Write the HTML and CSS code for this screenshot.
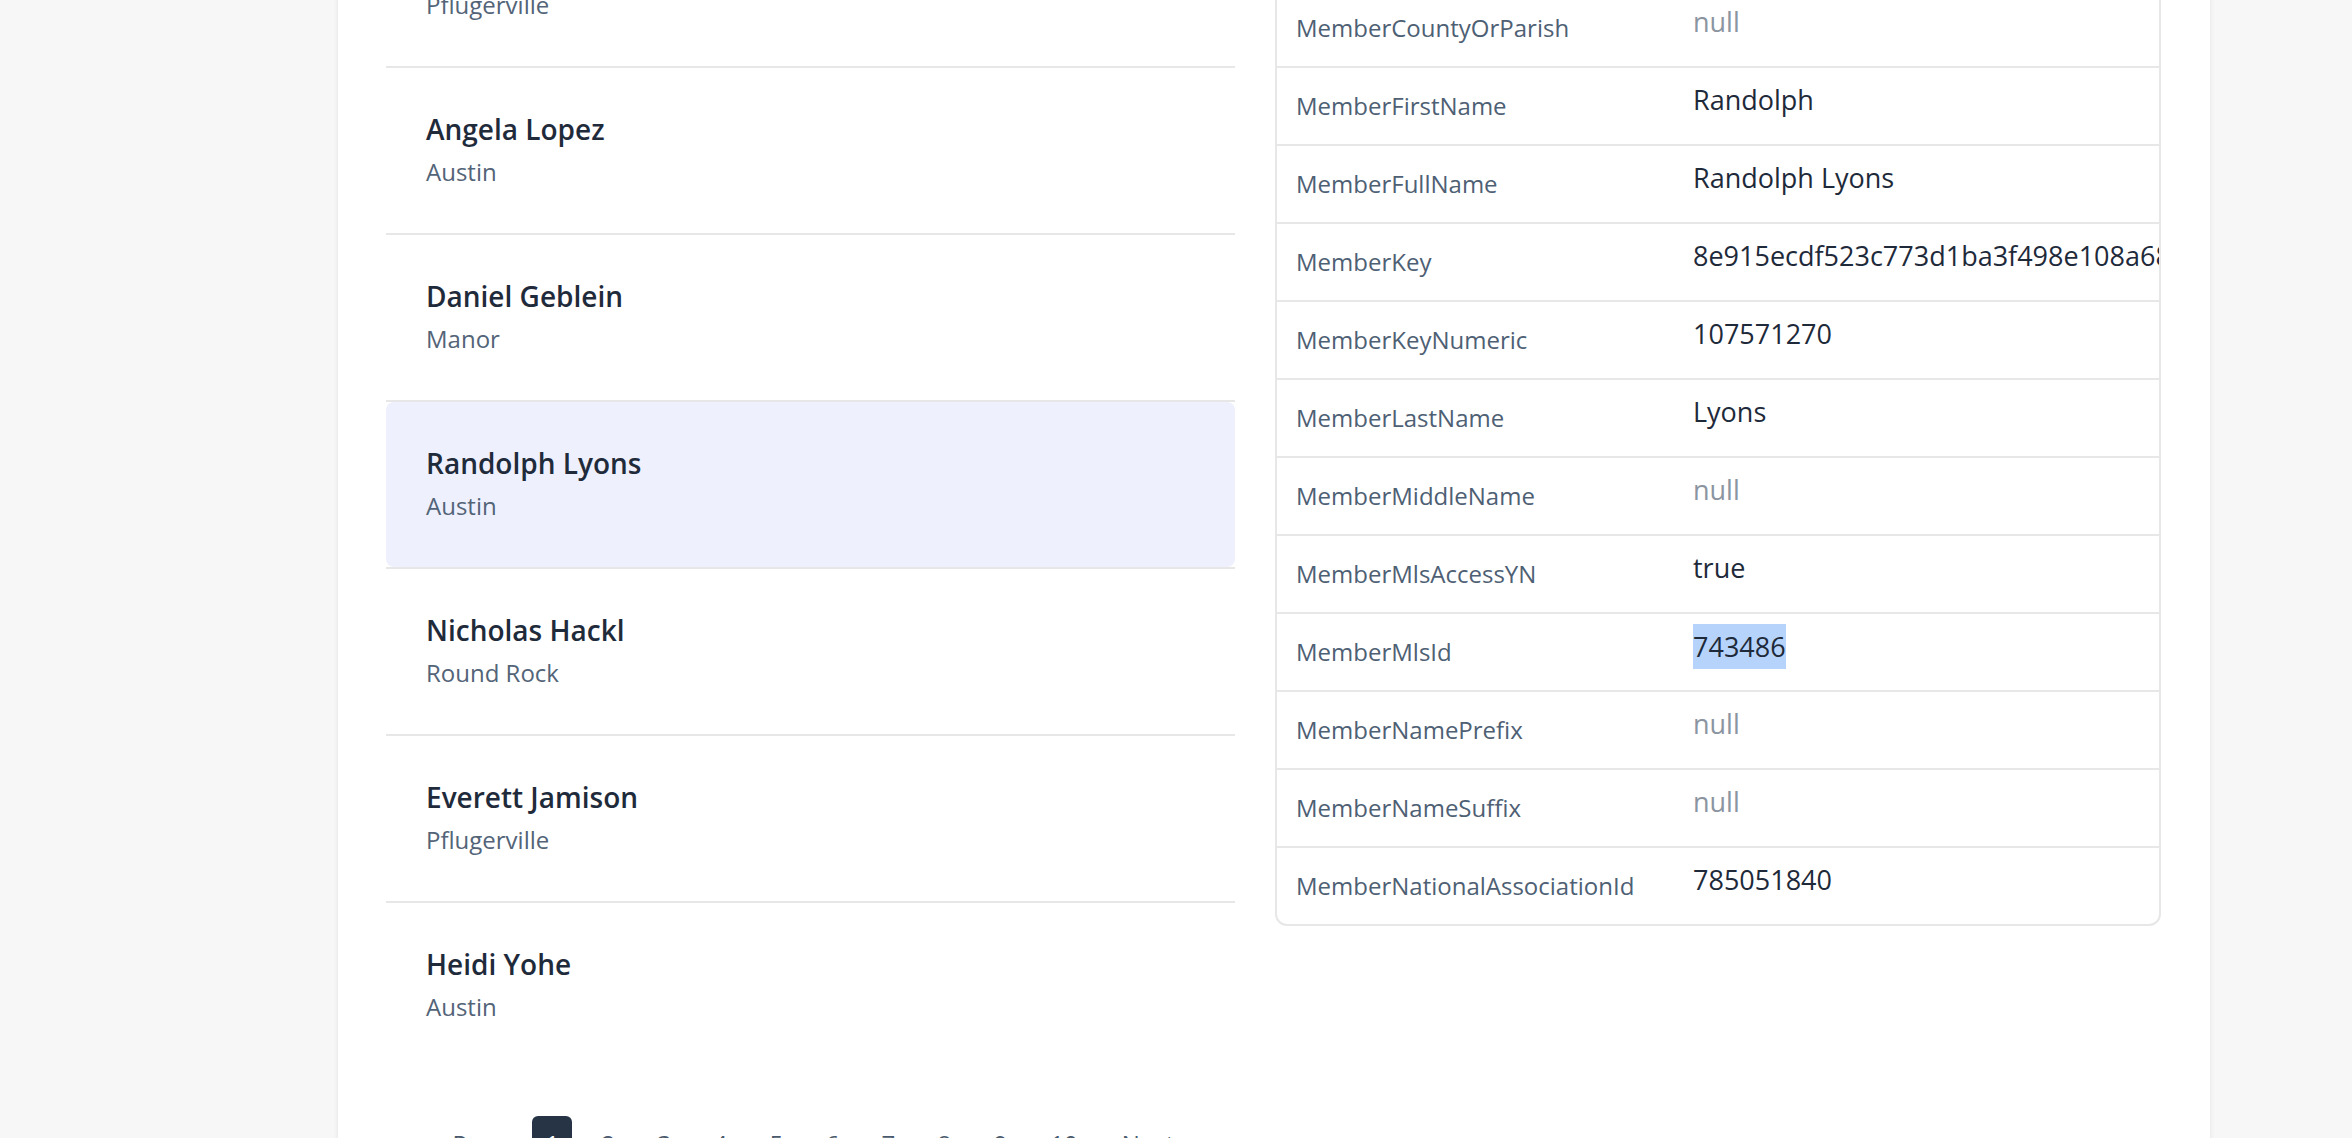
FILE: index.html
```html
<!DOCTYPE html>
<html lang="en">
<head>
<meta charset="utf-8">
<title>Members</title>
<link rel="stylesheet" href="styles.css">
</head>
<body>
<main class="page">
  <section class="card">
    <div class="columns">
      <div class="list-col">
        <ul class="member-list">
          <li class="member"><div class="member-inner"><div class="member-name">Sarah Whitfield</div><div class="member-city">Pflugerville</div></div></li>
          <li class="member"><div class="member-inner"><div class="member-name">Angela Lopez</div><div class="member-city">Austin</div></div></li>
          <li class="member"><div class="member-inner"><div class="member-name">Daniel Geblein</div><div class="member-city">Manor</div></div></li>
          <li class="member is-selected"><div class="member-inner"><div class="member-name">Randolph Lyons</div><div class="member-city">Austin</div></div></li>
          <li class="member"><div class="member-inner"><div class="member-name">Nicholas Hackl</div><div class="member-city">Round Rock</div></div></li>
          <li class="member"><div class="member-inner"><div class="member-name">Everett Jamison</div><div class="member-city">Pflugerville</div></div></li>
          <li class="member"><div class="member-inner"><div class="member-name">Heidi Yohe</div><div class="member-city">Austin</div></div></li>
        </ul>
        <nav class="pager">
          <a class="pager-item">Prev</a>
          <a class="pager-item is-num is-current">1</a>
          <a class="pager-item is-num">2</a>
          <a class="pager-item is-num">3</a>
          <a class="pager-item is-num">4</a>
          <a class="pager-item is-num">5</a>
          <a class="pager-item is-num">6</a>
          <a class="pager-item is-num">7</a>
          <a class="pager-item is-num">8</a>
          <a class="pager-item is-num">9</a>
          <a class="pager-item">10</a>
          <a class="pager-item">Next</a>
        </nav>
      </div>
      <div class="detail-col">
        <div class="fields">
          <div class="field"><div class="field-label">MemberCountyOrParish</div><div class="field-value is-null">null</div></div>
          <div class="field"><div class="field-label">MemberFirstName</div><div class="field-value">Randolph</div></div>
          <div class="field"><div class="field-label">MemberFullName</div><div class="field-value">Randolph Lyons</div></div>
          <div class="field"><div class="field-label">MemberKey</div><div class="field-value">8e915ecdf523c773d1ba3f498e108a68</div></div>
          <div class="field"><div class="field-label">MemberKeyNumeric</div><div class="field-value">107571270</div></div>
          <div class="field"><div class="field-label">MemberLastName</div><div class="field-value">Lyons</div></div>
          <div class="field"><div class="field-label">MemberMiddleName</div><div class="field-value is-null">null</div></div>
          <div class="field"><div class="field-label">MemberMlsAccessYN</div><div class="field-value">true</div></div>
          <div class="field"><div class="field-label">MemberMlsId</div><div class="field-value"><span class="selection">743486</span></div></div>
          <div class="field"><div class="field-label">MemberNamePrefix</div><div class="field-value is-null">null</div></div>
          <div class="field"><div class="field-label">MemberNameSuffix</div><div class="field-value is-null">null</div></div>
          <div class="field"><div class="field-label">MemberNationalAssociationId</div><div class="field-value">785051840</div></div>
        </div>
      </div>
    </div>
  </section>
</main>
</body>
</html>
```

FILE: styles.css
```css
* { box-sizing: border-box; }

html, body {
  margin: 0;
  padding: 0;
  height: 100%;
  overflow: hidden;
}

body {
  background: #f7f7f7;
  font-family: "Open Sans", "Lato", "Liberation Sans", sans-serif;
  color: #1e2a3a;
}

.page {
  padding: 0 142px 0 338px;
}

.card {
  margin-top: -148px;
  background: #ffffff;
  box-shadow: 0 0 5px rgba(0, 0, 0, 0.09);
  padding: 49px 49px 60px 48px;
  min-height: 1400px;
}

.columns {
  display: grid;
  grid-template-columns: 849px 1fr;
  column-gap: 40px;
  align-items: start;
}

/* list */
.member-list {
  list-style: none;
  margin: 0;
  padding: 0;
}

.member {
  border-bottom: 2px solid #e7e7e7;
}

.member:last-child {
  border-bottom: none;
}

.member-inner {
  height: 165px;
  padding: 40px 40px 0 40px;
  border-radius: 8px;
}

.member.is-selected .member-inner {
  background: #eef1fd;
}

.member-name {
  font-size: 28px;
  line-height: 42px;
  font-weight: 600;
  color: #1f2b3b;
}

.member-city {
  font-size: 24px;
  line-height: 44px;
  color: #536478;
}

/* pager */
.pager {
  margin-top: 48px;
  padding-left: 6px;
  display: flex;
  justify-content: center;
  gap: 16px;
}

.pager-item {
  padding: 10px 14px;
  text-align: center;
  font-size: 24px;
  line-height: 36px;
  color: #4a5a6d;
  border-radius: 6px;
}

.pager-item.is-num {
  width: 40px;
  padding-left: 0;
  padding-right: 0;
}

.pager-item.is-current {
  background: #263445;
  color: #ffffff;
}

/* detail */
.detail-col {
  padding-top: 87px;
}

.fields {
  border: 2px solid #e7e7e7;
  border-radius: 12px;
  overflow: hidden;
}

.field {
  display: grid;
  grid-template-columns: 416px 1fr;
  height: 78px;
  border-bottom: 2px solid #e7e7e7;
}

.field:last-child {
  height: 76px;
  border-bottom: none;
}

.field-label {
  align-self: center;
  padding-left: 19px;
  font-size: 24px;
  line-height: 34px;
  color: #4e6074;
  white-space: nowrap;
}

.field-value {
  padding-top: 10px;
  font-size: 27px;
  line-height: 44px;
  color: #1e2a3a;
  white-space: nowrap;
  overflow: hidden;
}

.field-value.is-null {
  color: #8b95a1;
}

.selection {
  display: inline-block;
  line-height: 45px;
  background: #b6d4fb;
}
```
